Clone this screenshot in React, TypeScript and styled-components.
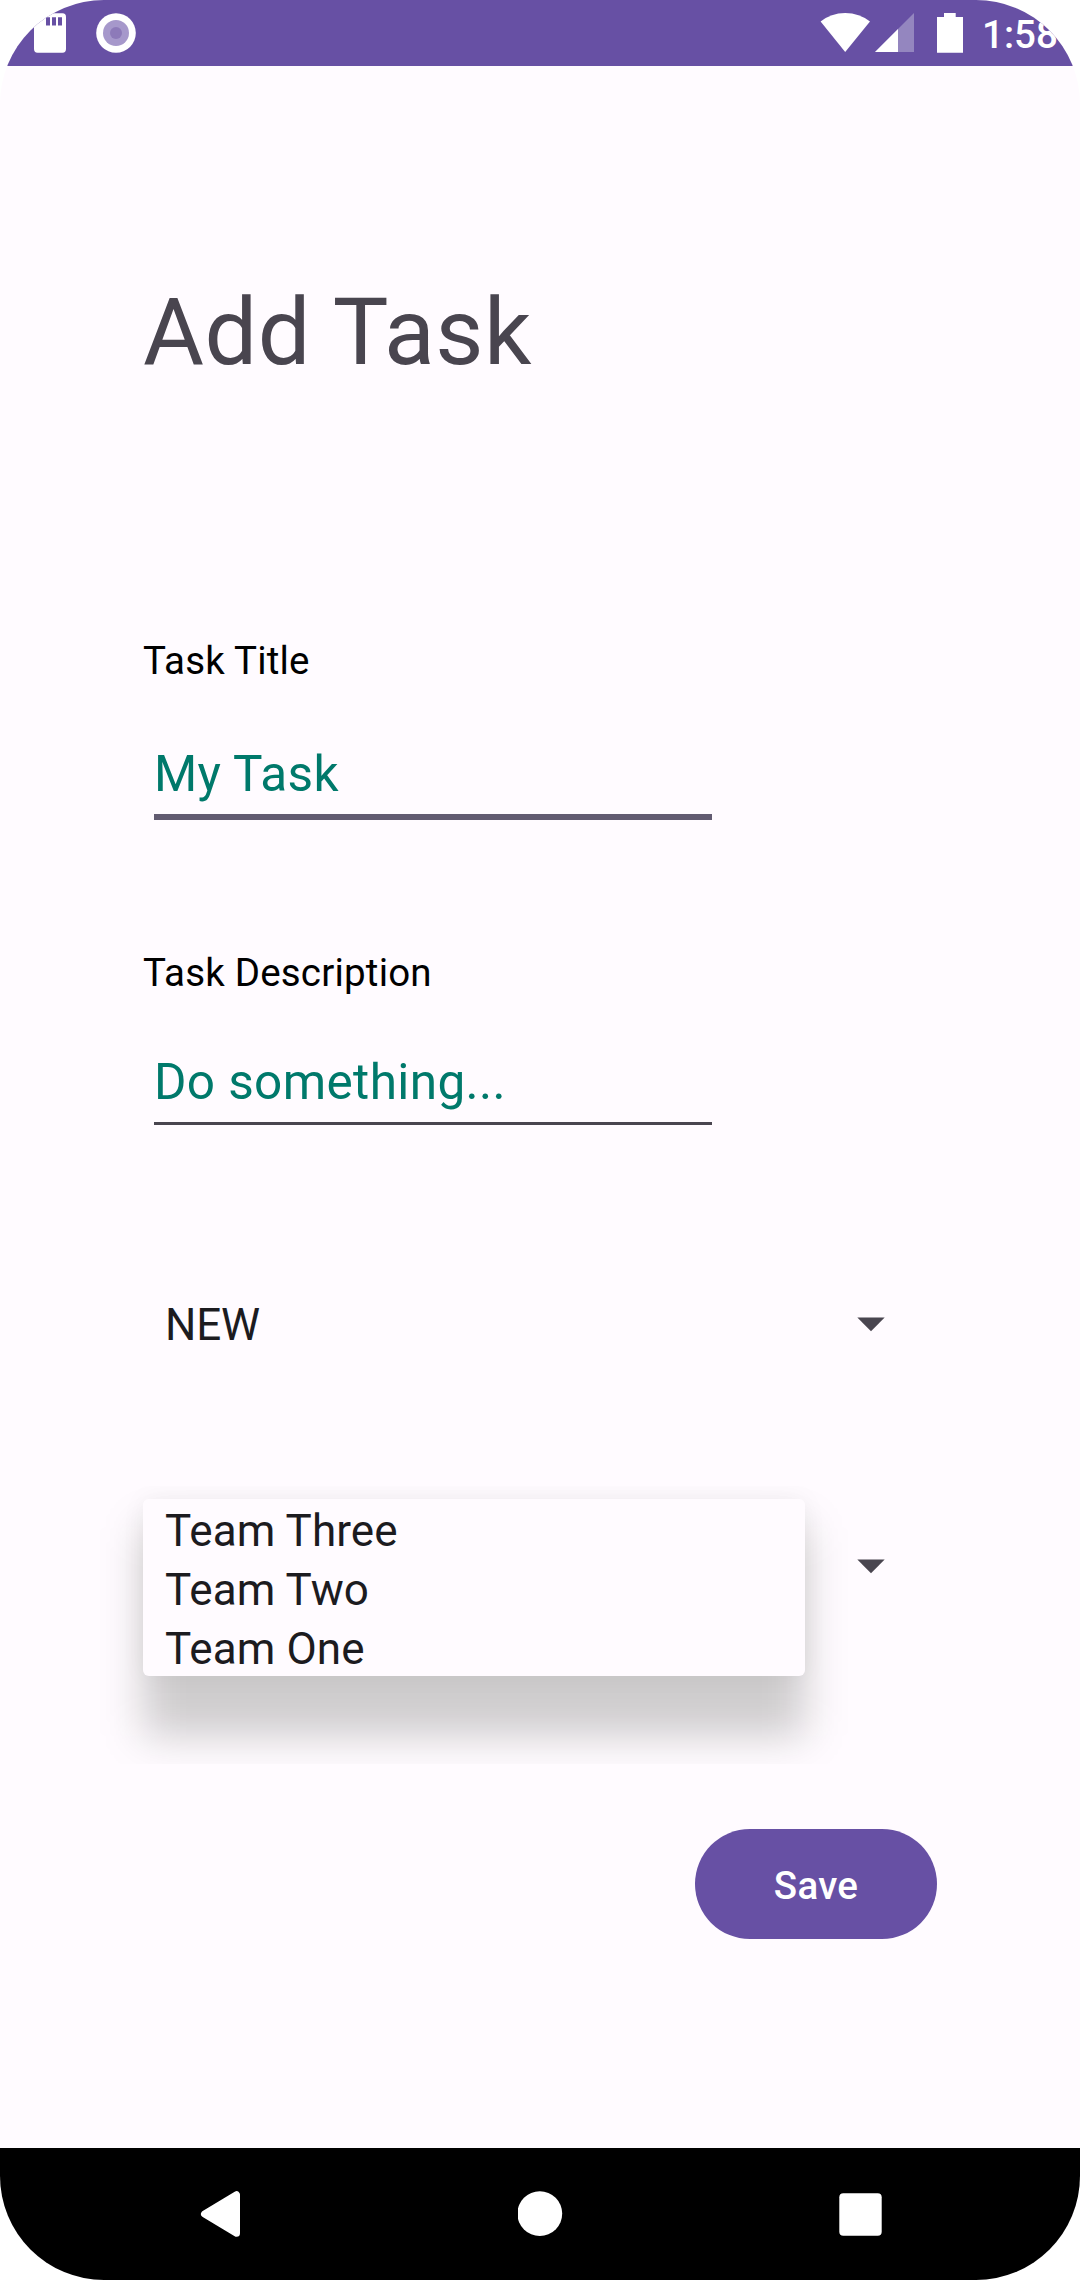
import React from "react";
import styled, { createGlobalStyle } from "styled-components";

const GlobalStyle = createGlobalStyle`
  html, body { margin: 0; padding: 0; background: #ffffff; }
  *, *::before, *::after { box-sizing: border-box; }
`;

const Screen = styled.div`
  width: 1080px;
  height: 2280px;
  display: flex;
  flex-direction: column;
  overflow: hidden;
  border-radius: 104px;
  background: #fffbff;
  font-family: Roboto, "Liberation Sans", sans-serif;
  color: #1c1b1f;
`;

const StatusBar = styled.header`
  flex: none;
  height: 66px;
  padding: 0 23px 0 34px;
  display: flex;
  justify-content: space-between;
  align-items: center;
  background: #6750a4;
`;

const StatusGroup = styled.div<{ $gap: number }>`
  display: flex;
  align-items: center;
  gap: ${(p) => p.$gap}px;
  height: 66px;
`;

const Glyph = styled.svg`
  display: block;
  flex: none;
`;

const StatusIcons = styled.div`
  display: flex;
  align-items: center;
  width: 162px;
`;

const Clock = styled.span`
  width: 75px;
  font-size: 38.5px;
  font-weight: 500;
  line-height: 46px;
  padding-top: 4px;
  color: #ffffff;
  white-space: nowrap;
`;

const Content = styled.main`
  flex: 1;
  display: flex;
  flex-direction: column;
  padding: 211px 143px 0;
`;

const Heading = styled.h1`
  margin: 0 0 251px;
  font-size: 93.5px;
  font-weight: 400;
  line-height: 110px;
  letter-spacing: 0.5px;
  color: #49454f;
`;

const Field = styled.section<{ $height: number }>`
  height: ${(p) => p.$height}px;
  display: flex;
  flex-direction: column;
`;

const Label = styled.label<{ $gap: number }>`
  margin-bottom: ${(p) => p.$gap}px;
  font-size: 38.5px;
  line-height: 46px;
  letter-spacing: 0.2px;
  color: #000000;
`;

const TextBox = styled.div<{ $focused?: boolean }>`
  width: 558px;
  margin-left: 11px;
  height: ${(p) => (p.$focused ? 76 : 73.25)}px;
  font-size: 49.5px;
  line-height: 60px;
  letter-spacing: 0.38px;
  color: #00796b;
  border-bottom: ${(p) => (p.$focused ? "6px solid #625b71" : "3px solid #49454f")};
`;

const Spinner = styled.div`
  position: relative;
  height: 66px;
  display: flex;
  align-items: center;
  justify-content: space-between;
  padding: 0 52px 0 22px;
`;

const SpinnerValue = styled.span`
  padding-top: 2px;
  font-size: 44px;
  line-height: 59px;
  letter-spacing: -0.2px;
`;

const Gap = styled.div<{ $size: number }>`
  flex: none;
  height: ${(p) => p.$size}px;
`;

const Popup = styled.div`
  position: absolute;
  left: 0;
  top: -34px;
  width: 662px;
  height: 177px;
  clip-path: inset(-13px -70px -88px -70px);

  &::before {
    content: "";
    position: absolute;
    inset: 28px 0 -60px 0;
    border-radius: 6px;
    background: rgba(10, 21, 5, 0.2);
    filter: blur(21px);
  }
  &::after {
    content: "";
    position: absolute;
    inset: 0;
    border-radius: 6px;
    box-shadow: 0 0 24px rgba(0, 0, 0, 0.05);
  }
`;

const OptionList = styled.ul`
  position: relative;
  z-index: 1;
  margin: 0;
  padding: 0;
  list-style: none;
  height: 177px;
  border-radius: 6px;
  background: #fffbff;
`;

const Option = styled.li`
  height: 59px;
  padding: 3px 22px 0;
  font-size: 44px;
  line-height: 59px;
  letter-spacing: 0.1px;
`;

const SaveButton = styled.button`
  align-self: flex-end;
  width: 242px;
  height: 110px;
  padding: 4px 0 0;
  border: 0;
  border-radius: 55px;
  background: #6750a4;
  color: #ffffff;
  font: 500 38.5px/46px Roboto, "Liberation Sans", sans-serif;
  letter-spacing: 0.27px;
`;

const NavBar = styled.nav`
  flex: none;
  height: 132px;
  display: flex;
  justify-content: space-between;
  align-items: center;
  padding: 0 198px 0 198px;
  background: #000000;
`;

const Caret = () => (
  <Glyph width="28" height="15" viewBox="0 0 28 15">
    <path d="M0.3 0.4H27.7L14 14.2Z" fill="#49454f" />
  </Glyph>
);

const options = ["Team Three", "Team Two", "Team One"];

export default function App() {
  return (
    <>
      <GlobalStyle />
      <Screen>
        <StatusBar>
          <StatusGroup $gap={30}>
            <Glyph width="32" height="40" viewBox="0 0 32 40">
              <path
                fill="#fff"
                fillRule="evenodd"
                d="M12 0.3H28.5Q32 0.3 32 4V36Q32 39.7 28.5 39.7H3.500Q0 39.7 0 36V12ZM12 4.300V12.500H16V4.300ZM18 4.300V12.500H22V4.300ZM24 4.300V12.500H28V4.300Z"
              />
            </Glyph>
            <Glyph width="40" height="40" viewBox="0 0 40 40">
              <circle cx="20" cy="20" r="19.800" fill="#fff" />
              <circle cx="20" cy="20" r="13" fill="#a698cb" />
              <circle cx="20" cy="20" r="6" fill="#8d7ab9" />
            </Glyph>
          </StatusGroup>
          <StatusGroup $gap={0}>
            <StatusIcons>
              <Glyph width="162" height="40" viewBox="0 0 162 40">
                <path d="M0.600 8.600Q11 0 25.200 0T50 8.600L25.200 39Z" fill="#fff" />
                <path d="M55 39L94 0V39Z" fill="#9486bf" />
                <path d="M55 39L78 16V39Z" fill="#fff" />
                <path d="M117 4H124V0H135.700V4H143V39.700H117Z" fill="#fff" />
              </Glyph>
            </StatusIcons>
            <Clock>1:58</Clock>
          </StatusGroup>
        </StatusBar>

        <Content>
          <Heading>Add Task</Heading>
          <Field $height={312}>
            <Label $gap={60}>Task Title</Label>
            <TextBox $focused>My Task</TextBox>
          </Field>
          <Field $height={341}>
            <Label $gap={56}>Task Description</Label>
            <TextBox>Do something...</TextBox>
          </Field>
          <Spinner>
            <SpinnerValue>NEW</SpinnerValue>
            <Caret />
          </Spinner>
          <Gap $size={176} />
          <Spinner>
            <SpinnerValue />
            <Caret />
            <Popup>
              <OptionList>
                {options.map((name) => (
                  <Option key={name}>{name}</Option>
                ))}
              </OptionList>
            </Popup>
          </Spinner>
          <Gap $size={230} />
          <SaveButton type="button">Save</SaveButton>
        </Content>

        <NavBar>
          <Glyph width="44" height="48" viewBox="0 0 44 48">
            <path
              d="M6.500 24L38.500 4.700V43.300Z"
              fill="#fff"
              stroke="#fff"
              strokeWidth="7"
              strokeLinejoin="round"
            />
          </Glyph>
          <Glyph width="46" height="46" viewBox="0 0 46 46">
            <circle cx="21.800" cy="22.600" r="22.400" fill="#fff" />
          </Glyph>
          <Glyph width="43" height="43" viewBox="0 0 43 43">
            <rect x="0.300" y="0.300" width="42.400" height="42.400" rx="4" fill="#fff" />
          </Glyph>
        </NavBar>
      </Screen>
    </>
  );
}
